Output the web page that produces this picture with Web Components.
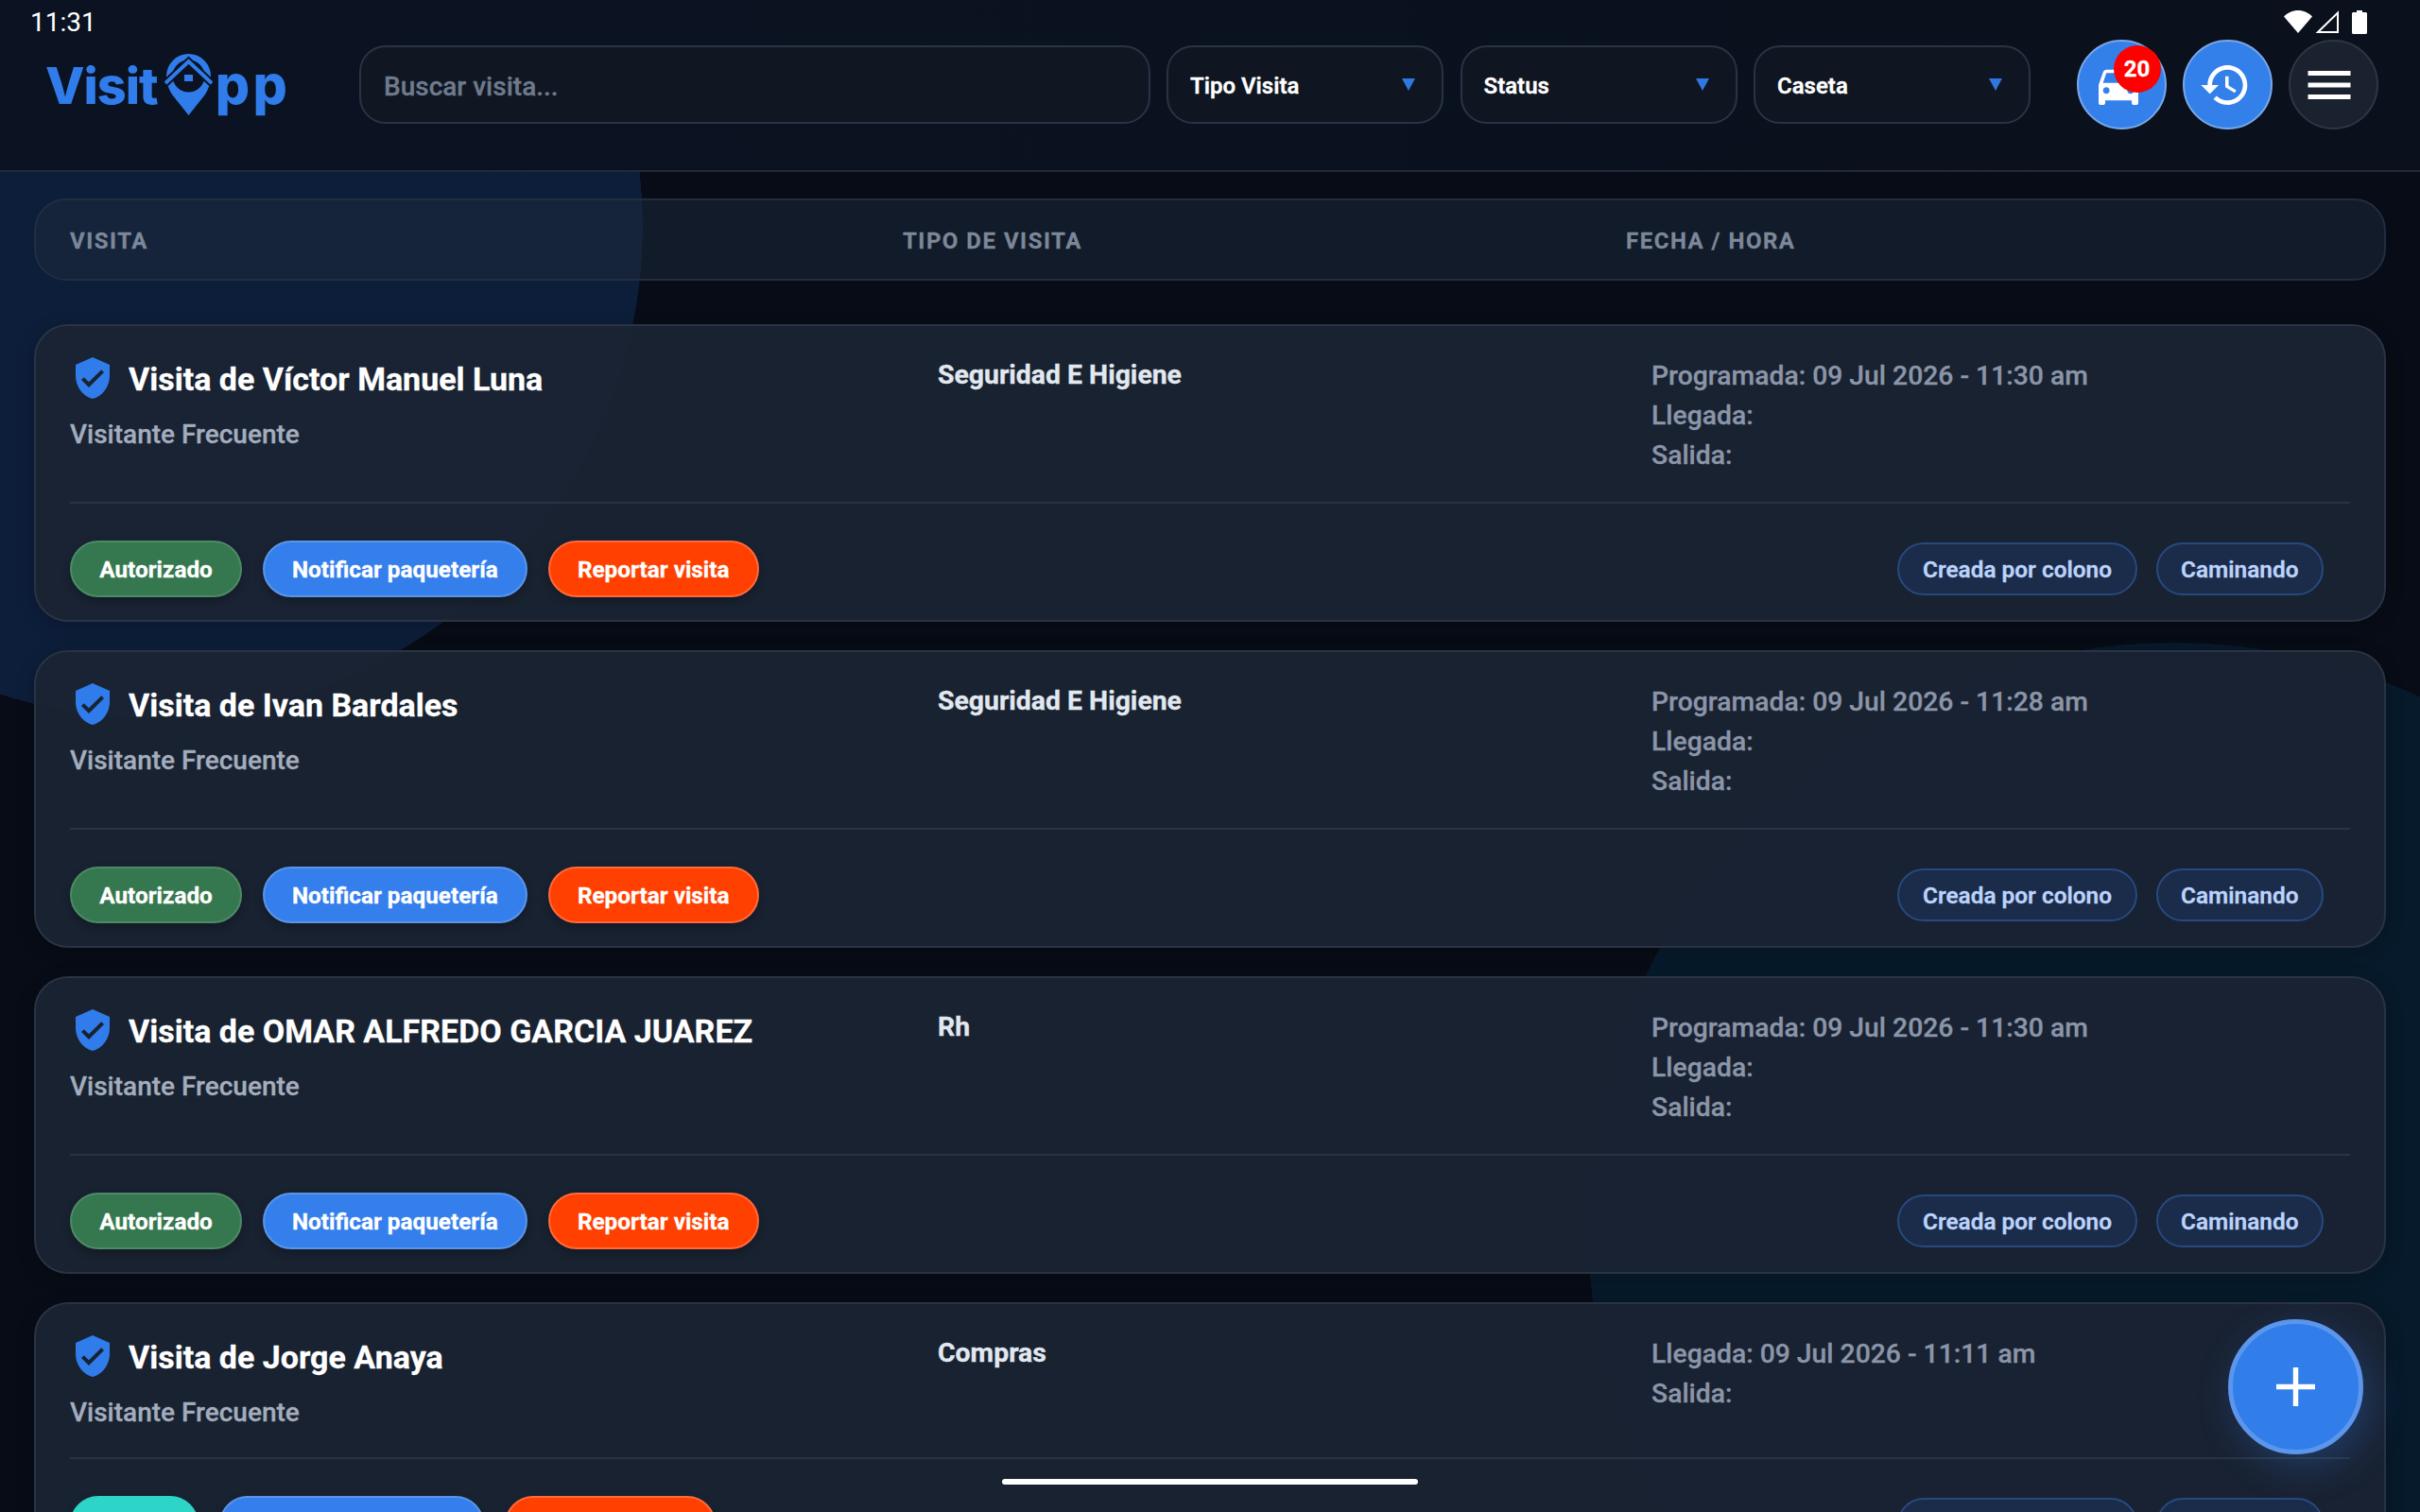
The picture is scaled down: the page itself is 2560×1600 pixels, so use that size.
<!DOCTYPE html>
<html lang="es">
<head>
<meta charset="utf-8">
<title>VisitApp</title>
<style>
    html, body {
        margin: 0;
        height: 100%;
        overflow: hidden;
        background: #070c16;
    }
</style>
</head>
<body>
<visit-app>
    <status-bar></status-bar>
    <app-header></app-header>
    <visit-list>
        <table-head></table-head>

        <visit-card>
            <span slot="title">Visita de Víctor Manuel Luna</span>
            <span slot="subtitle">Visitante Frecuente</span>
            <span slot="tipo">Seguridad E Higiene</span>
            <div slot="dates">Programada: 09 Jul 2026 - 11:30 am</div>
            <div slot="dates">Llegada:</div>
            <div slot="dates">Salida:</div>
            <visit-pill slot="actions" kind="green">Autorizado</visit-pill>
            <visit-pill slot="actions" kind="blue">Notificar paquetería</visit-pill>
            <visit-pill slot="actions" kind="orange">Reportar visita</visit-pill>
            <visit-chip slot="chips">Creada por colono</visit-chip>
            <visit-chip slot="chips">Caminando</visit-chip>
        </visit-card>

        <visit-card>
            <span slot="title">Visita de Ivan Bardales</span>
            <span slot="subtitle">Visitante Frecuente</span>
            <span slot="tipo">Seguridad E Higiene</span>
            <div slot="dates">Programada: 09 Jul 2026 - 11:28 am</div>
            <div slot="dates">Llegada:</div>
            <div slot="dates">Salida:</div>
            <visit-pill slot="actions" kind="green">Autorizado</visit-pill>
            <visit-pill slot="actions" kind="blue">Notificar paquetería</visit-pill>
            <visit-pill slot="actions" kind="orange">Reportar visita</visit-pill>
            <visit-chip slot="chips">Creada por colono</visit-chip>
            <visit-chip slot="chips">Caminando</visit-chip>
        </visit-card>

        <visit-card>
            <span slot="title">Visita de OMAR ALFREDO GARCIA JUAREZ</span>
            <span slot="subtitle">Visitante Frecuente</span>
            <span slot="tipo">Rh</span>
            <div slot="dates">Programada: 09 Jul 2026 - 11:30 am</div>
            <div slot="dates">Llegada:</div>
            <div slot="dates">Salida:</div>
            <visit-pill slot="actions" kind="green">Autorizado</visit-pill>
            <visit-pill slot="actions" kind="blue">Notificar paquetería</visit-pill>
            <visit-pill slot="actions" kind="orange">Reportar visita</visit-pill>
            <visit-chip slot="chips">Creada por colono</visit-chip>
            <visit-chip slot="chips">Caminando</visit-chip>
        </visit-card>

        <visit-card>
            <span slot="title">Visita de Jorge Anaya</span>
            <span slot="subtitle">Visitante Frecuente</span>
            <span slot="tipo">Compras</span>
            <div slot="dates">Llegada: 09 Jul 2026 - 11:11 am</div>
            <div slot="dates">Salida:</div>
            <!-- the label of this pill is cut off by the bottom of the screen -->
            <visit-pill slot="actions" kind="teal" style="width: 136px"></visit-pill>
            <visit-pill slot="actions" kind="blue">Notificar paquetería</visit-pill>
            <visit-pill slot="actions" kind="orange">Reportar visita</visit-pill>
            <visit-chip slot="chips">Creada por colono</visit-chip>
            <visit-chip slot="chips">Caminando</visit-chip>
        </visit-card>
    </visit-list>
    <add-fab></add-fab>
    <home-bar></home-bar>
</visit-app>

<script>
const FONT = `Roboto, "Liberation Sans", sans-serif`;

class VisitApp extends HTMLElement {
    constructor() {
        super();
        this.attachShadow({mode: "open"}).innerHTML = `
            <style>
                :host {
                    display: block;
                    position: relative;
                    width: 2560px;
                    height: 1600px;
                    overflow: hidden;
                    font-family: ${FONT};
                    -webkit-text-stroke: 0.3px;
                    background:
                        radial-gradient(circle 520px at 160px 240px, #0d1e3a 519.5px, transparent 520px),
                        radial-gradient(circle 620px at 2300px 1300px, #071a2b 619.5px, transparent 620px),
                        #070c16;
                }
            </style>
            <slot></slot>
        `;
    }
}

class StatusBar extends HTMLElement {
    constructor() {
        super();
        this.attachShadow({mode: "open"}).innerHTML = `
            <style>
                :host {
                    display: flex;
                    align-items: center;
                    justify-content: space-between;
                    height: 40px;
                    padding: 6px 56px 0 32px;
                    box-sizing: border-box;
                    color: #fff;
                    font-size: 28px;
                    -webkit-text-stroke: 0;
                    background: linear-gradient(90deg, #0b1222, #0a111c);
                }
                .icons {
                    display: flex;
                    align-items: center;
                    gap: 3px;
                }
                svg {
                    display: block;
                }
            </style>
            <span>11:31</span>
            <div class="icons">
                <svg width="30" height="24" viewBox="0 0 30 24"><path fill="#fff" d="M15 24 0 6.500C4 2.600 9.200 0 15 0s11 2.600 15 6.500z"/></svg>
                <svg width="25" height="24" viewBox="0 0 25 24"><path fill="none" stroke="#fff" stroke-width="2" d="M3 23 24 2.500V23z"/></svg>
                <svg style="margin-left: 11px" width="16" height="25" viewBox="0 0 16 25"><path fill="#fff" d="M5 0h6v2h3.500c.8 0 1.500.7 1.500 1.500V23.500c0 .8-.7 1.500-1.500 1.500h-13C.7 25 0 24.300 0 23.500V3.500C0 2.700.7 2 1.500 2H5z"/></svg>
            </div>
        `;
    }
}

class AppHeader extends HTMLElement {
    constructor() {
        super();
        this.attachShadow({mode: "open"}).innerHTML = `
            <style>
                :host {
                    display: flex;
                    align-items: center;
                    height: 142px;
                    padding: 0 44px 41px 49px;
                    box-sizing: border-box;
                    border-bottom: 2px solid #222a38;
                    background: linear-gradient(90deg, #0b1222, #0a111c);
                }
                visit-logo {
                    width: 331px;
                    flex: none;
                    margin-left: -1px;
                    margin-right: 1px;
                }
                .search {
                    width: 836.5px;
                    height: 83px;
                    flex: none;
                    box-sizing: border-box;
                    padding: 3px 24px 0;
                    display: flex;
                    align-items: center;
                    border: 2px solid #2a3344;
                    border-radius: 28px;
                    background: #101722;
                    color: #6f7a8d;
                    font-size: 28px;
                    font-weight: 500;
                }
                .filters {
                    display: flex;
                    gap: 17.5px;
                    margin-left: 17.5px;
                }
                .round {
                    display: flex;
                    gap: 17px;
                    margin-left: 48.5px;
                }
            </style>
            <visit-logo></visit-logo>
            <div class="search">Buscar visita...</div>
            <div class="filters">
                <filter-select>Tipo Visita</filter-select>
                <filter-select>Status</filter-select>
                <filter-select>Caseta</filter-select>
            </div>
            <div class="round">
                <round-button kind="blue" badge="20" style="--nudge: -3px">
                    <svg width="56" height="56" viewBox="0 0 24 24"><path fill="#fff" d="M18.920 6.010C18.720 5.420 18.160 5 17.500 5h-11c-.66 0-1.210.42-1.420 1.010L3 12v8c0 .55.45 1 1 1h1c.55 0 1-.45 1-1v-1h12v1c0 .55.45 1 1 1h1c.55 0 1-.45 1-1v-8l-2.080-5.990zM6.500 16c-.83 0-1.500-.67-1.500-1.500S5.670 13 6.500 13s1.500.67 1.500 1.500S7.330 16 6.500 16zm11 0c-.83 0-1.500-.67-1.500-1.500s.67-1.500 1.500-1.500 1.500.67 1.500 1.500-.67 1.500-1.500 1.500zM5 11l1.500-4.500h11L19 11H5z"/></svg>
                </round-button>
                <round-button kind="blue" style="--nudge: -2px">
                    <svg width="56" height="56" viewBox="0 0 24 24"><path fill="#fff" d="M13 3c-4.970 0-9 4.030-9 9H1l3.890 3.890.07.14L9 12H6c0-3.870 3.130-7 7-7s7 3.130 7 7-3.130 7-7 7c-1.930 0-3.680-.79-4.940-2.060l-1.420 1.420C8.270 19.990 10.510 21 13 21c4.970 0 9-4.030 9-9s-4.030-9-9-9zm-1 5v5l4.280 2.540.72-1.210-3.500-2.080V8H12z"/></svg>
                </round-button>
                <round-button kind="dark" style="--nudge: -4px">
                    <svg width="60" height="60" viewBox="0 0 24 24"><path fill="#fff" d="M3 18h18v-2H3v2zm0-5h18v-2H3v2zm0-7v2h18V6H3z"/></svg>
                </round-button>
            </div>
        `;
    }
}

class VisitLogo extends HTMLElement {
    constructor() {
        super();
        this.attachShadow({mode: "open"}).innerHTML = `
            <style>
                :host {
                    display: flex;
                    align-items: center;
                    color: #2f7cea;
                    font-family: Inter, ${FONT};
                    font-size: 54px;
                    font-weight: 800;
                    line-height: 64px;
                    -webkit-text-stroke: 0;
                }
                .name {
                    letter-spacing: -1px;
                    margin-top: 2px;
                }
                svg {
                    display: block;
                    flex: none;
                    margin: 0 6px 0 7px;
                }
                .rest {
                    font-size: 57px;
                    letter-spacing: 3.5px;
                    margin-top: 1px;
                    margin-left: -3px;
                }
            </style>
            <span class="name">Visit</span>
            <svg width="51" height="65" viewBox="0 0 51 65">
                <path fill="#2f7cea" fill-rule="evenodd" d="M25.500 0A23.500 23.500 0 0 1 49 23.500C49 32 46 38 43 43L25.500 65 8 43C5 38 2 32 2 23.500A23.500 23.500 0 0 1 25.500 0zM8.500 23.500a17 17 0 1 0 34 0a17 17 0 1 0 -34 0z"/>
                <path fill="none" stroke="#0b1222" stroke-width="8" d="M1 31 25.500 8 50 31"/>
                <path fill="none" stroke="#2f7cea" stroke-width="4" d="M1 31 25.500 8 50 31"/>
                <path fill="#2f7cea" d="M21 22h9v7h-9z"/>
            </svg>
            <span class="rest">pp</span>
        `;
    }
}

class FilterSelect extends HTMLElement {
    constructor() {
        super();
        this.attachShadow({mode: "open"}).innerHTML = `
            <style>
                :host {
                    display: flex;
                    align-items: center;
                    justify-content: space-between;
                    width: 293px;
                    height: 83px;
                    box-sizing: border-box;
                    padding: 2px 28px 0 23px;
                    border: 2px solid #2a3344;
                    border-radius: 28px;
                    background: #0f1621;
                    color: #fff;
                    font-size: 24px;
                    font-weight: 600;
                }
                svg {
                    display: block;
                    margin-top: -2px;
                }
            </style>
            <slot></slot>
            <svg width="14" height="13" viewBox="0 0 14 13"><path fill="#2f78e0" d="M0 0h14L7 13z"/></svg>
        `;
    }
}

class RoundButton extends HTMLElement {
    constructor() {
        super();
        const badge = this.getAttribute("badge");
        this.attachShadow({mode: "open"}).innerHTML = `
            <style>
                :host {
                    display: flex;
                    align-items: center;
                    justify-content: center;
                    position: relative;
                    width: 95px;
                    height: 95px;
                    box-sizing: border-box;
                    border-radius: 50%;
                    border: 2px solid #2e3644;
                    background: #1a2230;
                }
                :host([kind="blue"]) {
                    border-color: #7ba8e8;
                    background: #3480eb;
                }
                ::slotted(svg) {
                    display: block;
                    transform: translateX(var(--nudge, 0));
                }
                .badge {
                    position: absolute;
                    top: 4px;
                    right: 4px;
                    width: 50px;
                    height: 50px;
                    border-radius: 50%;
                    background: #ff0000;
                    color: #fff;
                    font-size: 24px;
                    font-weight: 700;
                    line-height: 50px;
                    text-align: center;
                }
            </style>
            <slot></slot>
            ${badge ? `<span class="badge">${badge}</span>` : ""}
        `;
    }
}

class TableHead extends HTMLElement {
    constructor() {
        super();
        this.attachShadow({mode: "open"}).innerHTML = `
            <style>
                :host {
                    display: grid;
                    grid-template-columns: 881px 765px 1fr;
                    align-items: center;
                    height: 87px;
                    box-sizing: border-box;
                    padding: 3px 36px 0;
                    margin-bottom: 46px;
                    border: 2px solid #222d3f;
                    border-radius: 34px;
                    background: rgba(30, 41, 59, 0.5);
                    color: #7c8799;
                    font-size: 24px;
                    font-weight: 700;
                    letter-spacing: 1.5px;
                }
            </style>
            <span>VISITA</span>
            <span>TIPO DE VISITA</span>
            <span>FECHA / HORA</span>
        `;
    }
}

class VisitList extends HTMLElement {
    constructor() {
        super();
        this.attachShadow({mode: "open"}).innerHTML = `
            <style>
                :host {
                    display: flex;
                    flex-direction: column;
                    padding: 28px 36px 0;
                }
                ::slotted(visit-card) {
                    margin-bottom: 30px;
                }
            </style>
            <slot></slot>
        `;
    }
}

class VisitCard extends HTMLElement {
    constructor() {
        super();
        this.attachShadow({mode: "open"}).innerHTML = `
            <style>
                :host {
                    display: block;
                    box-sizing: border-box;
                    padding: 31px 36px 24px;
                    border: 2px solid #2a3344;
                    border-radius: 36px;
                    background: rgba(26, 35, 51, 0.97);
                    box-shadow: 0 4px 20px rgba(0, 0, 0, 0.2);
                }
                .top {
                    display: grid;
                    grid-template-columns: 918px 755px 1fr;
                    padding-bottom: 28px;
                    border-bottom: 2px solid #2a3344;
                }
                .who {
                    padding-bottom: 2px;
                }
                .title {
                    display: flex;
                    align-items: center;
                    gap: 14px;
                    height: 48px;
                    color: #fff;
                    font-size: 34px;
                    font-weight: 700;
                }
                .title svg {
                    display: block;
                    flex: none;
                }
                .title .text {
                    padding-top: 1px;
                }
                .sub {
                    margin-top: 19px;
                    color: #a3adbd;
                    font-size: 28px;
                    font-weight: 500;
                    line-height: 34px;
                }
                .tipo {
                    margin-top: 4px;
                    color: #e2e8f0;
                    font-size: 28.4px;
                    font-weight: 700;
                    line-height: 34px;
                }
                .dates {
                    margin-top: 1px;
                    color: #8b95a8;
                    font-size: 28.3px;
                    font-weight: 500;
                    line-height: 42px;
                }
                .bottom {
                    display: flex;
                    align-items: center;
                    justify-content: space-between;
                    margin-top: 39px;
                }
                .actions {
                    display: flex;
                    gap: 21.5px;
                }
                .chips {
                    display: flex;
                    gap: 20px;
                    margin-right: 28px;
                }
            </style>
            <div class="top">
                <div class="who">
                    <div class="title">
                        <svg width="48" height="48" viewBox="0 0 24 24"><path fill="#2f7cea" d="M12 1 3 5v6c0 5.550 3.840 10.740 9 12 5.160-1.260 9-6.450 9-12V5l-9-4zm-2 16-4-4 1.410-1.410L10 14.170l6.590-6.590L18 9l-8 8z"/></svg>
                        <span class="text"><slot name="title"></slot></span>
                    </div>
                    <div class="sub"><slot name="subtitle"></slot></div>
                </div>
                <div class="tipo"><slot name="tipo"></slot></div>
                <div class="dates"><slot name="dates"></slot></div>
            </div>
            <div class="bottom">
                <div class="actions"><slot name="actions"></slot></div>
                <div class="chips"><slot name="chips"></slot></div>
            </div>
        `;
    }
}

class VisitPill extends HTMLElement {
    constructor() {
        super();
        this.attachShadow({mode: "open"}).innerHTML = `
            <style>
                :host {
                    display: block;
                    height: 60px;
                    box-sizing: border-box;
                    padding: 0 29.3px;
                    border: 2px solid;
                    border-radius: 30px;
                    color: #fff;
                    font-size: 24.3px;
                    font-weight: 700;
                    line-height: 58px;
                    box-shadow: 0 4px 10px rgba(0, 0, 0, 0.25);
                }
                :host([kind="green"]) { background: #35784f; border-color: #4d8a66; }
                :host([kind="blue"]) { background: #357fed; border-color: #5a95ea; }
                :host([kind="orange"]) { background: #ff4000; border-color: #ff6a3c; }
                :host([kind="teal"]) { background: #2dd4c8; border-color: #2dd4c8; }
            </style>
            <slot></slot>
        `;
    }
}

class VisitChip extends HTMLElement {
    constructor() {
        super();
        this.attachShadow({mode: "open"}).innerHTML = `
            <style>
                :host {
                    display: block;
                    height: 56px;
                    box-sizing: border-box;
                    padding: 0 24.5px;
                    border: 2px solid #264a80;
                    border-radius: 28px;
                    background: #1b2c4a;
                    color: #bcd3fb;
                    font-size: 24.4px;
                    font-weight: 600;
                    line-height: 54px;
                }
            </style>
            <slot></slot>
        `;
    }
}

class AddFab extends HTMLElement {
    constructor() {
        super();
        this.attachShadow({mode: "open"}).innerHTML = `
            <style>
                :host {
                    display: flex;
                    align-items: center;
                    justify-content: center;
                    position: absolute;
                    left: 2357px;
                    top: 1396px;
                    width: 143px;
                    height: 143px;
                    box-sizing: border-box;
                    border: 5px solid #5b96ec;
                    border-radius: 50%;
                    background: #317de9;
                    box-shadow: 8px 12px 40px rgba(49, 125, 233, 0.28);
                }
                svg {
                    display: block;
                }
            </style>
            <svg width="41" height="41" viewBox="0 0 41 41"><path fill="#fff" d="M17.750 0h5.500v17.750H41v5.500H23.250V41h-5.500V23.250H0v-5.500h17.750z"/></svg>
        `;
    }
}

class HomeBar extends HTMLElement {
    constructor() {
        super();
        this.attachShadow({mode: "open"}).innerHTML = `
            <style>
                :host {
                    display: block;
                    position: absolute;
                    left: 1060px;
                    top: 1565px;
                    width: 440px;
                    height: 6px;
                    border-radius: 3px;
                    background: #fff;
                }
            </style>
        `;
    }
}

customElements.define("visit-app", VisitApp);
customElements.define("status-bar", StatusBar);
customElements.define("app-header", AppHeader);
customElements.define("visit-logo", VisitLogo);
customElements.define("filter-select", FilterSelect);
customElements.define("round-button", RoundButton);
customElements.define("table-head", TableHead);
customElements.define("visit-list", VisitList);
customElements.define("visit-card", VisitCard);
customElements.define("visit-pill", VisitPill);
customElements.define("visit-chip", VisitChip);
customElements.define("add-fab", AddFab);
customElements.define("home-bar", HomeBar);
</script>
</body>
</html>
